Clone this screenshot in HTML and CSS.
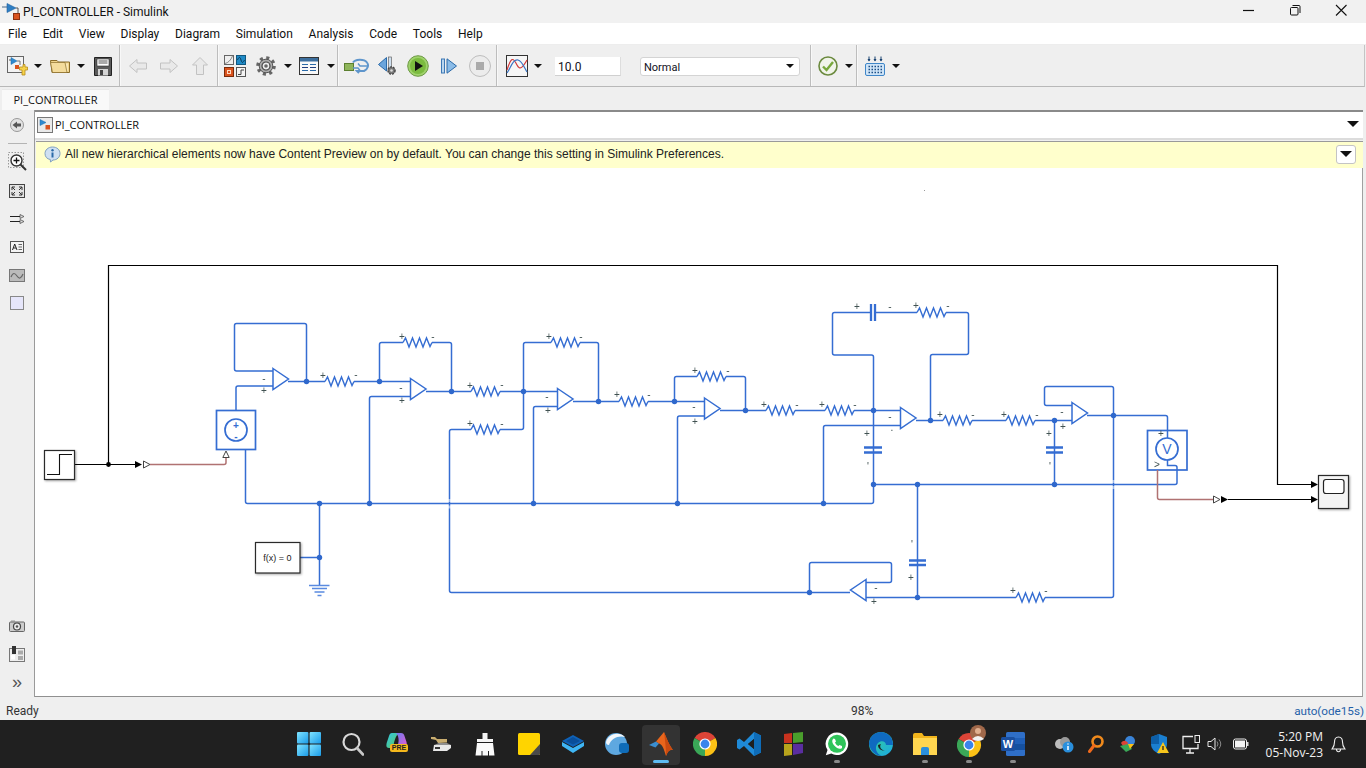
FILE: index.html
```html
<!DOCTYPE html>
<html lang="en">
<head>
<meta charset="utf-8">
<title>PI_CONTROLLER - Simulink</title>
<link rel="stylesheet" href="styles.css">
</head>
<body>
<header class="titlebar">
  <svg class="app-icon" width="20" height="20" viewBox="0 0 20 20"><path d="M0 5H5" stroke="#4a6a8a"/><path d="M5 1.5L14 6L5 10.500Z" fill="#2f7fc4" stroke="#1f5f9f" stroke-width=".6"/><path d="M14 6H16V11" fill="none" stroke="#555"/><rect x="11.500" y="11.500" width="6" height="6" fill="#d9531e" stroke="#8a3010"/></svg>
  <span class="title-text">PI_CONTROLLER - Simulink</span>
  <div class="winbtns">
    <svg width="46" height="23" viewBox="0 0 46 23"><path d="M17 10.500H28" stroke="#111" stroke-width="1.200"/></svg>
    <svg width="46" height="23" viewBox="0 0 46 23"><rect x="18.500" y="7.500" width="7.500" height="7.500" rx="1" fill="none" stroke="#111"/><path d="M20.500 5.500H27a1 1 0 0 1 1 1V13" fill="none" stroke="#111"/></svg>
    <svg width="46" height="23" viewBox="0 0 46 23"><path d="M18 5L28.500 15.500M28.500 5L18 15.500" stroke="#111" stroke-width="1.100"/></svg>
  </div>
</header>
<nav class="menubar">
  <span>File</span><span>Edit</span><span>View</span><span>Display</span><span>Diagram</span><span>Simulation</span><span>Analysis</span><span>Code</span><span>Tools</span><span>Help</span>
</nav>
<div class="toolbar">
  <svg width="21" height="21" viewBox="0 0 21 21"><rect x=".5" y=".5" width="16" height="16" fill="#f3f3f3" stroke="#666"/><path d="M2 4H4" stroke="#555"/><path d="M4 1.500L10 5L4 8.500Z" fill="#2f8ad0" stroke="#1c6aa8" stroke-width=".5"/><path d="M10 5H13V9" fill="none" stroke="#777"/><rect x="8" y="9" width="4" height="4" fill="#d9531e"/><path d="M13 11H16V8.500H18V11H20.500V14H18V16.500V19H15V14H12.500V11Z" fill="#f6d24a" stroke="#b58a1a" stroke-width=".8"/></svg>
  <i class="caret"></i>
  <svg width="20" height="14" viewBox="0 0 20 14"><path d="M.5 1.500H7L8.500 3H19.500V13.500H2Z" fill="#f1d58c" stroke="#8a6d2a"/><path d="M2.500 4.500H18V12.500H4Z" fill="#f9e7b5"/><path d="M.5 3.500H15L17 13.500H2.500Z" fill="#f4dc9c" stroke="#8a6d2a" stroke-width=".7"/></svg>
  <i class="caret"></i>
  <svg width="18" height="19" viewBox="0 0 18 19"><path d="M.5.500H17.500V18.500H.5Z" fill="#5b5b5b" stroke="#222"/><rect x="3" y="2" width="12" height="7" fill="#fff" stroke="#333" stroke-width=".6"/><path d="M4.500 4H13.500M4.500 6H13.500" stroke="#555"/><rect x="4" y="12" width="10" height="6.500" fill="#d5d5d5"/><rect x="6" y="13" width="3" height="5" fill="#444"/></svg>
  <i class="sep"></i>
  <svg width="18" height="14" viewBox="0 0 18 14"><path d="M.5 7L8 .5V4H17.500V10H8V13.500Z" fill="#e9e9e9" stroke="#c2c2c2"/></svg>
  <svg width="18" height="14" viewBox="0 0 18 14"><path d="M17.500 7L10 .5V4H.5V10H10V13.500Z" fill="#e9e9e9" stroke="#c2c2c2"/></svg>
  <svg width="16" height="18" viewBox="0 0 16 18"><path d="M8 .5L15.500 8H11.500V17.500H4.500V8H.5Z" fill="#e9e9e9" stroke="#c2c2c2"/></svg>
  <i class="sep"></i>
  <svg width="22" height="22" viewBox="0 0 22 22"><rect x=".5" y=".5" width="9" height="9" fill="#eee" stroke="#666"/><path d="M1 8.500C4 8 7 5 8.500 1" fill="none" stroke="#888"/><rect x="12.500" y=".5" width="9" height="9" fill="#1f8ac6" stroke="#10577f"/><path d="M13.500 5C15 1.500 16 1.500 17 5S19 8 20.500 5" fill="none" stroke="#0c3c5c"/><rect x=".5" y="12.500" width="9" height="9" fill="#d9531e" stroke="#7a2a0a"/><rect x="3.500" y="15.500" width="3" height="3" fill="none" stroke="#ffd9c0"/><rect x="12.500" y="12.500" width="9" height="9" fill="#f4f4f4" stroke="#555"/><path d="M14 19.500H17V15H20" fill="none" stroke="#444"/></svg>
  <svg width="20" height="20" viewBox="0 0 20 20"><circle cx="10" cy="10" r="8" fill="none" stroke="#666" stroke-width="3.600" stroke-dasharray="3 3.280"/><circle cx="10" cy="10" r="6.800" fill="#aaa" stroke="#555"/><circle cx="10" cy="10" r="4" fill="#eee" stroke="#444" stroke-width="1.200"/><circle cx="10" cy="10" r="1.800" fill="#666"/></svg>
  <i class="caret"></i>
  <svg width="20" height="18" viewBox="0 0 20 18"><rect x=".5" y=".5" width="19" height="17" fill="#f8f8f8" stroke="#333"/><rect x="1" y="1" width="18" height="3.500" fill="#3d6f9e"/><path d="M3 7.500H9M11 7.500H17" stroke="#2a6aa8" stroke-width="1.200"/><path d="M3 10.500H9M11 10.500H17" stroke="#1f3f7f" stroke-width="1.200"/><path d="M3 13.500H9M11 13.500H17" stroke="#2a6aa8" stroke-width="1.200"/></svg>
  <i class="caret"></i>
  <i class="sep"></i>
  <svg width="25" height="17" viewBox="0 0 25 17"><rect x=".5" y="5.500" width="9" height="7" fill="#8fb55a" stroke="#5b7f2f"/><path d="M9 4.500C11 1 20 .5 23 4.500C25 7 24 11 20 13H13L15 15" fill="none" stroke="#5f96cc" stroke-width="2"/><path d="M23 8H16L14 5.500M9 10H14L16 12.500" fill="none" stroke="#5f96cc" stroke-width="1.500"/></svg>
  <svg width="20" height="20" viewBox="0 0 20 20"><path d="M8.500 1.500V15L.5 8.500Z" fill="#6ba5dc" stroke="#2c6aa8"/><rect x="10.500" y="1" width="3" height="11" fill="#cfe0f0" stroke="#666" stroke-width=".7"/><circle cx="13.500" cy="14.500" r="3.600" fill="#777" stroke="#444" stroke-width="1.300" stroke-dasharray="2 1"/><circle cx="13.500" cy="14.500" r="1.300" fill="#ddd"/></svg>
  <svg width="22" height="22" viewBox="0 0 22 22"><circle cx="11" cy="11" r="10.300" fill="#9fd26b" stroke="#6d9a45"/><circle cx="11" cy="11" r="8" fill="#7bbb3f"/><path d="M8 6L16 11L8 16Z" fill="#111"/></svg>
  <svg width="16" height="16" viewBox="0 0 16 16"><rect x=".5" y="1" width="3" height="14" fill="#b9d5ee" stroke="#3d78b5"/><path d="M6 .8L15.500 8L6 15.200Z" fill="#8bbce8" stroke="#2c6aa8"/></svg>
  <svg width="22" height="22" viewBox="0 0 22 22"><circle cx="11" cy="11" r="10.500" fill="#ececec" stroke="#bdbdbd"/><rect x="7" y="7" width="8" height="8" fill="#aaa"/></svg>
  <i class="sep"></i>
  <svg width="30" height="22" viewBox="2 0 30 22"><rect x="8.500" y=".5" width="21" height="21" fill="#f6f6f6" stroke="#333"/><path d="M9 15C13 2 15 2 19 10C22 16 25 12 29 5" fill="none" stroke="#d23b3b" stroke-width="1.200"/><path d="M9 18C13 12 15 4 20 5C24 6 26 12 29 17" fill="none" stroke="#3a74c4" stroke-width="1.200"/></svg>
  <i class="caret"></i>
  <span class="stop-input">10.0</span>
  <div class="mode-select"><span>Normal</span><i class="caret"></i></div>
  <i class="sep wide"></i>
  <svg width="20" height="20" viewBox="0 0 20 20"><circle cx="10" cy="10" r="9" fill="#f1f4ea" stroke="#6b8a3f" stroke-width="1.600"/><path d="M5 10.500L8.500 14L15 6" fill="none" stroke="#78a83c" stroke-width="2.400"/></svg>
  <i class="caret"></i>
  <i class="sep narrow"></i>
  <svg width="20" height="20" viewBox="0 0 20 20"><path d="M4 .5V5M10 .5V5M16 .5V5" stroke="#17406f"/><path d="M2.500 3L4 5.500L5.500 3ZM8.500 3L10 5.500L11.500 3ZM14.500 3L16 5.500L17.500 3Z" fill="#17406f"/><rect x=".5" y="7.500" width="19" height="12" rx="1.500" fill="#cfe4f7" stroke="#3f86c8"/><path d="M3.500 10.500H17M3.500 13.500H17M3.500 16.500H17" stroke="#1d4f86" stroke-width="1.500" stroke-dasharray="1.500 1.500"/></svg>
  <i class="caret"></i>
</div>
<div class="tabrow"><div class="tab">PI_CONTROLLER</div></div>
<main class="workspace">
  <aside class="sidebar">
    <div class="side-cell first"><svg width="16" height="16" viewBox="0 0 16 16"><circle cx="8" cy="8" r="6.500" fill="#e2e2e2" stroke="#999"/><path d="M3.500 8L8 4.500V6.500H12V9.500H8V11.500Z" fill="#555"/></svg></div>
    <div class="side-rule"></div>
    <div class="side-cell zoomcell"><svg width="22" height="22" viewBox="0 0 22 22"><rect x=".5" y=".5" width="15" height="15" fill="none" stroke="#999" stroke-dasharray="1.500 1.500"/><circle cx="8.500" cy="8.500" r="5.500" fill="#fff" stroke="#333" stroke-width="1.400"/><path d="M5.500 8.500H11.500M8.500 5.500V11.500" stroke="#111" stroke-width="1.300"/><path d="M12.500 12.500L18 18" stroke="#333" stroke-width="2"/></svg></div>
    <div class="side-cell"><svg width="16" height="14" viewBox="0 0 16 14"><rect x=".5" y=".5" width="15" height="13" fill="#e4e4e4" stroke="#444"/><path d="M3 3H6M3 3V6M13 3H10M13 3V6M3 11H6M3 11V8M13 11H10M13 11V8M3 3L6 6M13 3L10 6M3 11L6 8M13 11L10 8" stroke="#333" fill="none"/></svg></div>
    <div class="side-cell"><svg width="15" height="10" viewBox="0 0 15 10"><path d="M0 2.500H10M0 7.500H10" stroke="#222"/><path d="M10 .5L14 2.500L10 4.500ZM10 5.500L14 7.500L10 9.500Z" fill="#ddd" stroke="#444" stroke-width=".7"/></svg></div>
    <div class="side-cell"><svg width="14" height="12" viewBox="0 0 14 12"><rect x=".5" y=".5" width="13" height="11" fill="#f4f4f4" stroke="#555"/><path d="M2.500 9L4.700 3L7 9M3.400 7H6" fill="none" stroke="#222"/><path d="M8.500 3.500H12M8.500 6H12M8.500 8.500H12" stroke="#666"/></svg></div>
    <div class="side-cell"><svg width="16" height="13" viewBox="0 0 16 13"><rect x=".5" y=".5" width="15" height="12" fill="#bbb" stroke="#777"/><path d="M2 8C4 3 6 4 8 7S12 10 14 5" fill="none" stroke="#666" stroke-width="1.200"/></svg></div>
    <div class="side-cell"><svg width="14" height="14" viewBox="0 0 14 14"><rect x=".5" y=".5" width="13" height="13" fill="#e6e6fa" stroke="#888"/></svg></div>
    <div class="side-bottom">
      <div class="side-cell"><svg width="16" height="12" viewBox="0 0 16 12"><rect x=".5" y="2" width="15" height="9.500" rx="1" fill="#ccc" stroke="#666"/><rect x="2" y=".5" width="4" height="2" fill="#999"/><circle cx="8" cy="6.500" r="3.500" fill="#eee" stroke="#444" stroke-width="1.200"/><circle cx="8" cy="6.500" r="1.300" fill="#555"/></svg></div>
      <div class="side-cell"><svg width="16" height="16" viewBox="0 0 16 16"><rect x=".5" y="2.500" width="15" height="13" fill="#eee" stroke="#777"/><rect x="3" y="0" width="4" height="8" fill="#333"/><rect x="2" y="9" width="4" height="4.500" fill="#fff"/><rect x="9" y="4.500" width="5" height="4" fill="#aaa"/><rect x="9" y="10" width="5" height="4" fill="#aaa"/></svg></div>
      <div class="side-cell chevrons">&raquo;</div>
    </div>
  </aside>
  <section class="content">
    <div class="address">
      <svg width="16" height="16" viewBox="0 0 16 16"><rect x=".5" y=".5" width="15" height="15" fill="#eaeaea" stroke="#777"/><path d="M3 2.500L9 5.500L3 8.500Z" fill="#2f8ad0" stroke="#1c6aa8" stroke-width=".5"/><rect x="8.500" y="8" width="4.500" height="4.500" fill="#d9531e"/></svg>
      <span class="crumb">PI_CONTROLLER</span>
      <i class="caret big"></i>
    </div>
    <div class="notice">
      <svg width="17" height="17" viewBox="0 0 17 17"><path d="M8.500 1C13 1 16 3.800 16 7.500S13 14 9 14L6.500 16L6.300 13.500C3 13 1 10.800 1 7.500S4 1 8.500 1Z" fill="#cfe0f2" stroke="#7f9fc0"/><circle cx="8.500" cy="4.200" r="1.200" fill="#2a6aa8"/><path d="M8.500 6.500V11.500" stroke="#2a6aa8" stroke-width="2"/></svg>
      <span class="notice-text">All new hierarchical elements now have Content Preview on by default. You can change this setting in Simulink Preferences.</span>
      <div class="notice-btn"><i class="caret big"></i></div>
    </div>
    <div class="canvas">
      <svg class="diagram" width="1327" height="528" viewBox="35 168 1327 528">
        <defs>
          <path id="res" d="M0 0L2.500-4.500L6 4.500L9.500-4.500L13 4.500L16.500-4.500L20 4.500L23.500-4.500L27 4L29 0" fill="none" stroke="#356dd2" stroke-width="1.400"/>
        </defs>
        <rect class="dot-mark" x="924" y="190" width="1" height="1"/>
        <g class="wire">
          <path d="M236 410V388Q236 386 238 386H273"/>
          <path d="M273 371H236.500Q234.500 371 234.500 369V325.500Q234.500 323.500 236.500 323.500H304.500Q306.500 323.500 306.500 325.500V381.500"/>
          <path d="M288 381.500H325M354 381.500H410"/>
          <path d="M379.500 381.500V344.500Q379.500 342.500 381.500 342.500H403M432 342.500H449.500Q451.500 342.500 451.500 344.500V391.500"/>
          <path d="M426 391.500H471M500 391.500H557"/>
          <path d="M523.500 391.500V344.500Q523.500 342.500 525.500 342.500H551M580 342.500H596.500Q598.500 342.500 598.500 344.500V401.500"/>
          <path d="M573 401.500H619M648 401.500H704"/>
          <path d="M471 429.500H451.500Q449.500 429.500 449.500 431.500V590.500Q449.500 592.500 451.500 592.500H850M500 429.500H521.500Q523.500 429.500 523.500 427.500V391.500"/>
          <path d="M533.500 503.500V408.500Q533.500 406.500 535.500 406.500H557"/>
          <path d="M674.500 401.500V378.500Q674.500 376.500 676.500 376.500H697M726 376.500H743.500Q745.500 376.500 745.500 378.500V410.500"/>
          <path d="M720 410.500H766M795 410.500H825M854 410.500H900"/>
          <path d="M677.500 503.500V418Q677.500 416 679.500 416H704"/>
          <path d="M369.500 503.500V398.500Q369.500 396.500 371.500 396.500H410"/>
          <path d="M245.500 450V501.500Q245.500 503.500 247.500 503.500H871.500Q873.500 503.500 873.500 501.500V357Q873.500 355 871.500 355H834.500Q832.500 355 832.500 353V314.500Q832.500 312.500 834.500 312.500H871M875 312.500H917M946 312.500H966.500Q968.500 312.500 968.500 314.500V352.500Q968.500 354.500 966.500 354.500H932.500Q930.500 354.500 930.500 356.500V420.500"/>
          <path d="M823.500 503.500V427.500Q823.500 425.500 825.500 425.500H900"/>
          <path d="M916 420.500H943M972 420.500H1006M1035 420.500H1072"/>
          <path d="M1072 405.500H1046.500Q1044.500 405.500 1044.500 403.500V388.500Q1044.500 386.500 1046.500 386.500H1111.500Q1113.500 386.500 1113.500 388.500V595.500Q1113.500 597.500 1111.500 597.500H1045M1016 597.500H866"/>
          <path d="M1087 415.500H1165.500Q1167.500 415.500 1167.500 417.500V438"/>
          <path d="M1167.500 460V465.500H1175Q1177 465.500 1177 467.500V482.500Q1177 484.500 1175 484.500H873.500"/>
          <path d="M1054.500 420.500V484.500M917.500 484.500V597.500"/>
          <path d="M866 582.500H889.500Q891.500 582.500 891.500 580.500V564.500Q891.500 562.500 889.500 562.500H811.500Q809.500 562.500 809.500 564.500V592.500"/>
          <path d="M319.500 503.500V585M300 557.500H319.500"/>
        </g>
        <path class="halo" d="M449.500 499V502M449.500 505.500V508.500M1113.500 480V483M1113.500 486V489"/>
        <g>
          <use href="#res" x="325" y="381.500"/><use href="#res" x="403" y="342.500"/><use href="#res" x="471" y="391.500"/>
          <use href="#res" x="551" y="342.500"/><use href="#res" x="619" y="401.500"/><use href="#res" x="471" y="429.500"/>
          <use href="#res" x="697" y="376.500"/><use href="#res" x="766" y="410.500"/><use href="#res" x="825" y="410.500"/>
          <use href="#res" x="917" y="312.500"/><use href="#res" x="943" y="420.500"/><use href="#res" x="1006" y="420.500"/>
          <use href="#res" x="1016" y="597.500"/>
        </g>
        <g class="amp">
          <polygon points="273,368.500 288.500,379 273,389.500"/>
          <polygon points="410.500,378.500 426,389 410.500,399.500"/>
          <polygon points="557.500,388.500 573,399 557.500,409.500"/>
          <polygon points="704.500,398 720,408.500 704.500,419"/>
          <polygon points="900.500,407.500 916,418 900.500,428.500"/>
          <polygon points="1072,402.500 1087.500,413 1072,423.500"/>
          <polygon points="866,579.500 850.500,590 866,600.500"/>
        </g>
        <g class="plate">
          <path d="M871 304V321M875 304V321"/>
          <path d="M864 447.500H882M864 452.500H882"/>
          <path d="M1046 447.500H1063M1046 452.500H1063"/>
          <path d="M909 560.500H926M909 565H926"/>
        </g>
        <g class="ground">
          <path d="M309 585.500H329.500M312 588.500H327M314.500 592H324.500M317.500 595.500H321.500"/>
        </g>
        <g class="node">
          <circle cx="306.500" cy="381.500" r="2.700"/><circle cx="379.500" cy="381.500" r="2.700"/><circle cx="451.500" cy="391.500" r="2.700"/>
          <circle cx="523.500" cy="391.500" r="2.700"/><circle cx="598.500" cy="401.500" r="2.700"/><circle cx="674.500" cy="401.500" r="2.700"/>
          <circle cx="745.500" cy="410.500" r="2.700"/><circle cx="873.500" cy="410.500" r="2.700"/><circle cx="930.500" cy="420.500" r="2.700"/>
          <circle cx="1054.500" cy="420.500" r="2.700"/><circle cx="1113.500" cy="415.500" r="2.700"/><circle cx="873.500" cy="484.500" r="2.700"/>
          <circle cx="917.500" cy="484.500" r="2.700"/><circle cx="1054.500" cy="484.500" r="2.700"/><circle cx="917.500" cy="597.500" r="2.700"/>
          <circle cx="809.500" cy="592.500" r="2.700"/><circle cx="319.500" cy="503.500" r="2.700"/><circle cx="369.500" cy="503.500" r="2.700"/>
          <circle cx="533.500" cy="503.500" r="2.700"/><circle cx="677.500" cy="503.500" r="2.700"/><circle cx="823.500" cy="503.500" r="2.700"/>
          <circle cx="319.500" cy="557.500" r="2.700"/>
        </g>
        <g class="block">
          <rect x="216.500" y="410.500" width="39" height="39"/>
          <circle cx="236" cy="430" r="11"/>
          <rect x="1147.500" y="430.500" width="39.500" height="39.500"/>
          <circle cx="1167" cy="449" r="11"/>
        </g>
        <text class="v-mark" x="1167" y="454">V</text>
        <text class="src-mark" x="236" y="429">+</text>
        <text class="src-mark" x="236" y="440">-</text>
        <g class="sign">
          <text x="264" y="382">-</text><text x="264" y="394">+</text>
          <text x="401" y="391">-</text><text x="402" y="404">+</text>
          <text x="547" y="400">-</text><text x="548" y="414">+</text>
          <text x="694" y="410">-</text><text x="695" y="425">+</text>
          <text x="890" y="420">-</text><text x="892" y="431">.</text>
          <text x="1062" y="415">-</text><text x="1063" y="430">+</text>
          <text x="876" y="591">-</text><text x="874" y="605">+</text>
          <text x="323" y="379">+</text><text x="356" y="378">-</text>
          <text x="402" y="340">+</text><text x="433" y="340">-</text>
          <text x="470" y="389">+</text><text x="502" y="388">-</text>
          <text x="549" y="340">+</text><text x="581" y="340">-</text>
          <text x="617" y="398">+</text><text x="649" y="398">-</text>
          <text x="470" y="427">+</text><text x="502" y="427">-</text>
          <text x="695" y="374">+</text><text x="728" y="374">-</text>
          <text x="764" y="408">+</text><text x="797" y="408">-</text>
          <text x="822" y="408">+</text><text x="855" y="408">-</text>
          <text x="857" y="310">+</text><text x="890" y="310">-</text>
          <text x="916" y="309">+</text><text x="948" y="309">-</text>
          <text x="940" y="418">+</text><text x="973" y="418">-</text>
          <text x="1004" y="418">+</text><text x="1037" y="418">-</text>
          <text x="1013" y="594">+</text><text x="1046" y="594">-</text>
          <text x="867" y="437">+</text><text x="868" y="470">'</text>
          <text x="1049" y="437">+</text><text x="1050" y="470">'</text>
          <text x="912" y="548">'</text><text x="911" y="581">+</text>
          <text x="1161" y="437">+</text><text x="1157" y="468">&gt;</text>
        </g>
        <g class="signal">
          <path d="M74 464.500H135M108.500 464.500V265.500H1277.500V484.500H1311M1228 499.500H1311"/>
        </g>
        <g class="head">
          <path d="M135 461L142 464.500L135 468ZM1221 496L1228 499.500L1221 503ZM1311 481L1318 484.500L1311 488ZM1311 496L1318 499.500L1311 503Z"/>
          <circle cx="108.500" cy="464.500" r="2.400"/>
        </g>
        <g class="phys">
          <path d="M150 464.500H224Q226 464.500 226 462.500V458"/>
          <path d="M1157.500 470V497.500Q1157.500 499.500 1159.500 499.500H1213"/>
        </g>
        <g class="hollow">
          <path d="M143.500 461L150 464.500L143.500 468ZM222.800 457.500L226 451L229.200 457.500ZM1213.500 496L1220 499.500L1213.500 503Z"/>
        </g>
        <g class="lib">
          <rect x="44.500" y="450.500" width="30" height="29"/>
          <rect x="255.500" y="542.500" width="44.500" height="30.500"/>
          <rect class="scope-body" x="1318.500" y="475.500" width="30" height="33"/>
        </g>
        <path class="step" d="M47 474.500H59.500V454.500H72"/>
        <rect class="scope-screen" x="1323.500" y="479.500" width="20.500" height="14" rx="2.500"/>
        <text class="fx" x="277.500" y="561">f(x) = 0</text>
      </svg>
    </div>
  </section>
</main>
<footer class="statusbar"><span class="ready">Ready</span><span class="zoom-level">98%</span><span class="solver">auto(ode15s)</span></footer>
<div class="taskbar">
  <div class="task"><svg width="24" height="24" viewBox="0 0 24 24"><defs><linearGradient id="wn" x1="0" y1="0" x2="1" y2="1"><stop offset="0" stop-color="#7fe3ff"/><stop offset="1" stop-color="#1a9be8"/></linearGradient></defs><rect x="0" y="0" width="11.400" height="11.400" rx="1" fill="url(#wn)"/><rect x="12.600" y="0" width="11.400" height="11.400" rx="1" fill="url(#wn)"/><rect x="0" y="12.600" width="11.400" height="11.400" rx="1" fill="url(#wn)"/><rect x="12.600" y="12.600" width="11.400" height="11.400" rx="1" fill="url(#wn)"/></svg></div>
  <div class="task"><svg width="22" height="24" viewBox="0 0 22 24"><circle cx="9.500" cy="10" r="8" fill="none" stroke="#d8d8d8" stroke-width="2.200"/><path d="M15 16L21 22.500" stroke="#c8c8c8" stroke-width="2.600" stroke-linecap="round"/></svg></div>
  <div class="task copilot"><svg width="22" height="18" viewBox="0 0 22 18"><defs><linearGradient id="cp" x1="0" y1="0" x2="1" y2="1"><stop offset="0" stop-color="#2fc6e8"/><stop offset="1" stop-color="#5fc85a"/></linearGradient><linearGradient id="cq" x1="0" y1="0" x2="1" y2="1"><stop offset="0" stop-color="#6a7bf0"/><stop offset="1" stop-color="#e85ad0"/></linearGradient></defs><path d="M6 1H13C9 4 8 11 7 16H3C0 16 0 13 1 10L3 4C3.500 2 4.500 1 6 1Z" fill="url(#cp)"/><path d="M10 1H15C17 1 18 2 18.500 4L20.500 10C21.500 14 20 16 17 16H10C13 13 14 5 10 1Z" fill="url(#cq)"/></svg><span class="pre">PRE</span></div>
  <div class="task"><svg width="22" height="16" viewBox="0 0 22 16"><path d="M1 1H5L7 3L17 3V6.500L8 7L6 4L1 3Z" fill="#c9ad6f"/><path d="M4 9H21V12L17 15H3Z" fill="#e8e8e8"/><path d="M4 9L9 7H17L21 9Z" fill="#8e8e8e"/><rect x="5" y="11" width="5" height="2" fill="#333"/></svg></div>
  <div class="task"><svg width="20" height="24" viewBox="0 0 20 24"><path d="M7.500 1H12.500V7H18V10H2V7H7.500Z" fill="#f4f4f4"/><path d="M2 11H18L19.500 23.500H14V19H13V23.500H7.500V19H6.500V23.500H.5Z" fill="#fafafa"/></svg></div>
  <div class="task"><svg width="22" height="22" viewBox="0 0 22 22"><rect width="22" height="22" rx="1.500" fill="#ffd400"/><path d="M12 22L22 11V20.500Q22 22 20.500 22Z" fill="#4a4a4a"/></svg></div>
  <div class="task"><svg width="22" height="18" viewBox="0 0 22 18"><path d="M11 0L22 6L11 12L0 6Z" fill="#0e62b8"/><path d="M0 7L11 13L22 7V11L11 18L0 11Z" fill="#3fb6f5"/><path d="M4 6L11 2L18 6L11 9.500Z" fill="#0a4f9a"/></svg></div>
  <div class="task"><svg width="24" height="24" viewBox="0 0 24 24"><circle cx="11" cy="12" r="11" fill="#5ea8e0"/><path d="M1 10C3 2 14-1 20 5C14 3 6 6 4 13C2 13 1 12 1 10Z" fill="#f2f7fb"/><rect x="14" y="11" width="10" height="10" rx="3" fill="#0f6cb8"/></svg></div>
  <div class="task active"><svg width="24" height="24" viewBox="0 0 24 24"><path d="M0 13L7 9.500L10 11.500L6.500 15.500Z" fill="#3b8ed0"/><path d="M7 9.500L15 0C17 5 20 13 24 18C21 17 19 19 17 24C15 17 13 12 10 11.500Z" fill="#e8651c"/><path d="M15 0C16 8 17 15 17 24C19 19 21 17 24 18C20 13 17 5 15 0Z" fill="#c94a10"/></svg></div>
  <div class="task"><svg width="24" height="24" viewBox="0 0 24 24"><use href="#chrome"/></svg></div>
  <div class="task"><svg width="24" height="24" viewBox="0 0 24 24"><path d="M17 0L24 3.500V20.500L17 24L7 14L2.500 17.500L0 16V8L2.500 6.500L7 10ZM17 7L11 12L17 17Z" fill="#1f8ad8"/><path d="M17 0L24 3.500V20.500L17 24Z" fill="#0e6cb8"/><path d="M17 7V17L11 12Z" fill="#1f1f1f"/></svg></div>
  <div class="task"><svg width="22" height="24" viewBox="0 0 22 24"><path d="M2 2L10 1V11L2 11Z" fill="#c8321e"/><path d="M11 1L21 0V10L11 11Z" fill="#4a9e2c"/><path d="M2 12H10V23L2 24Z" fill="#b8a41c"/><path d="M11 12H21V21L11 23Z" fill="#5a2ea0"/></svg></div>
  <div class="task dotted"><svg width="24" height="24" viewBox="0 0 24 24"><path d="M12 .5A11.300 11.300 0 0 0 2.500 18L.8 23.300L6.300 21.600A11.300 11.300 0 1 0 12 .5Z" fill="#fff"/><circle cx="12" cy="11.800" r="9" fill="#2fc45a"/><path d="M8.500 6.500C6.500 8 7 11 9.500 13.800S15 17.800 17 16L17 14L14.500 13L13.500 14C12 13.500 10.500 12 10 10.500L11 9.500L10 7Z" fill="#fff"/></svg></div>
  <div class="task"><svg width="24" height="24" viewBox="0 0 24 24"><defs><linearGradient id="eg" x1="0" y1="0" x2="1" y2="1"><stop offset="0" stop-color="#38d48a"/><stop offset="1" stop-color="#1aa8e8"/></linearGradient></defs><circle cx="12" cy="12" r="12" fill="url(#eg)"/><path d="M0 12C1 18 6 24 13 24C7 22 5 15 9 11C12 8 17 9 17 13H24C24 5 18 0 12 0C5 0 0 5 0 12Z" fill="#0f6ac0"/><path d="M9 13C9 17 13 19 16 18.500C12 18 10 15 12 12Z" fill="#1f1f1f"/></svg></div>
  <div class="task dotted"><svg width="24" height="22" viewBox="0 0 24 22"><path d="M0 2Q0 0 2 0H9L11 3H24V22H0Z" fill="#f2b51c"/><rect y="5" width="24" height="17" fill="#ffd650"/><path d="M8 22V16Q8 14 10 14H14Q16 14 16 16V22Z" fill="#2a8fdc"/></svg></div>
  <div class="task dotted"><svg class="chrome-a" width="30" height="32" viewBox="0 0 30 32"><defs><g id="chrome"><path d="M12 12L22.400 6A12 12 0 0 0 1.600 6Z" fill="#dc4437"/><path d="M12 12L1.600 6A12 12 0 0 0 12 24Z" fill="#3aa757"/><path d="M12 12L12 24A12 12 0 0 0 22.400 6Z" fill="#fbc116"/><circle cx="12" cy="12" r="5.600" fill="#fff"/><circle cx="12" cy="12" r="4.400" fill="#3a84ec"/></g></defs><g transform="translate(0 8)"><use href="#chrome"/></g><circle cx="21" cy="8" r="8" fill="#a0684a"/><circle cx="21" cy="6" r="3" fill="#e0b090"/><path d="M15 14Q21 8 27 14Q21 18 15 14Z" fill="#f2f2f2"/></svg></div>
  <div class="task dotted"><svg width="24" height="24" viewBox="0 0 24 24"><rect x="5" y="0" width="19" height="24" rx="1.500" fill="#2f6fc8"/><rect x="5" y="6" width="19" height="6" fill="#1f5fb8"/><rect x="5" y="12" width="19" height="6" fill="#15509f"/><rect x="0" y="5" width="14" height="14" rx="1.500" fill="#1a4fa0"/><text class="word-w" x="7" y="16">W</text></svg></div>
  <div class="tray">
    <div class="tray-cell"><svg width="20" height="18" viewBox="0 0 20 18"><circle cx="6" cy="9" r="5" fill="#bdbdbd"/><circle cx="11" cy="7" r="5" fill="#9a9a9a"/><circle cx="14" cy="12" r="5.500" fill="#2a8fdc"/><path d="M14 8.500V9.500M14 11V15" stroke="#fff" stroke-width="1.500"/></svg></div>
    <div class="tray-cell"><svg width="16" height="18" viewBox="0 0 16 18"><circle cx="9.500" cy="6.500" r="5" fill="none" stroke="#f08a1c" stroke-width="2.600"/><path d="M6 10.500L1.500 16.500" stroke="#f06a1c" stroke-width="3" stroke-linecap="round"/></svg></div>
    <div class="tray-cell"><svg width="18" height="18" viewBox="0 0 18 18"><circle cx="11" cy="6" r="5" fill="#3a84d8"/><path d="M2 8C4 5 7 5 9 8L6 14Z" fill="#dc4437"/><path d="M1 11L9 9L13 14L7 17Z" fill="#3aa757"/><path d="M9 9L15 9L11 14Z" fill="#fbc116"/></svg></div>
    <div class="tray-cell"><svg width="18" height="20" viewBox="0 0 18 20"><path d="M8 0L16 3V10C16 15 12 18 8 20C4 18 0 15 0 10V3Z" fill="#1a7fd0"/><path d="M8 0V10H0V3Z" fill="#0d5fa8"/><path d="M12 8L18 19H6Z" fill="#f6c51c"/><path d="M12 12V16" stroke="#222" stroke-width="1.300"/></svg></div>
    <div class="tray-cell"><svg width="19" height="19" viewBox="0 0 19 19"><path d="M11 1.500H1V13.500H16V9" fill="none" stroke="#eee" stroke-width="1.300"/><rect x="13" y=".5" width="4.500" height="7" fill="none" stroke="#eee"/><path d="M8 14V18M4 18H12" stroke="#eee" stroke-width="1.300"/></svg></div>
    <div class="tray-cell"><svg width="16" height="16" viewBox="0 0 16 16"><path d="M1 5.500H4L8 2V14L4 10.500H1Z" fill="none" stroke="#e8e8e8"/><path d="M10 5.500Q12 8 10 10.500M12 3.500Q15.500 8 12 12.500" fill="none" stroke="#8a8a8a"/></svg></div>
    <div class="tray-cell"><svg width="16" height="12" viewBox="0 0 16 12"><rect x=".5" y="1" width="13" height="10" rx="2" fill="none" stroke="#eee"/><rect x="2" y="2.500" width="10" height="7" fill="#f4f4f4"/><rect x="14" y="4" width="1.500" height="4" fill="#ddd"/></svg></div>
    <div class="clock"><span>5:20 PM</span><span>05-Nov-23</span></div>
    <div class="tray-cell"><svg width="15" height="17" viewBox="0 0 15 17"><path d="M7.500 1C4.500 1 3.500 3.500 3.500 6C3.500 10 2.500 11 1 13H14C12.500 11 11.500 10 11.500 6C11.500 3.500 10.500 1 7.500 1ZM5.500 13.500C5.700 16.500 9.300 16.500 9.500 13.500" fill="none" stroke="#eee" stroke-width="1.100"/></svg></div>
  </div>
</div>
</body>
</html>
```
FILE: styles.css
```css
* { box-sizing: border-box; }
html, body { margin: 0; padding: 0; }
body {
  width: 1366px;
  height: 768px;
  overflow: hidden;
  display: flex;
  flex-direction: column;
  background: #efefef;
  color: #111;
  font-family: "Open Sans", "Noto Sans", sans-serif;
  font-size: 12px;
}
i { display: block; }
svg { display: block; }

.titlebar { height: 23px; background: #f1f1f1; display: flex; align-items: center; position: relative; }
.app-icon { margin-left: 2px; }
.title-text { margin-left: 1px; font: 12px "Roboto", sans-serif; }
.winbtns { margin-left: auto; margin-right: 2px; display: flex; }

.menubar { height: 22px; background: #fff; display: flex; align-items: center; padding: 1px 0 0 8px; gap: 15.800px; border-bottom: 1px solid #ededed; font: 12px "Roboto", sans-serif; }

.toolbar {
  height: 42px;
  padding: 1px 0 0 3px;
  margin-right: 1px;
  display: grid;
  grid-template-columns: 28px 14px 30px 12px 32px 2px 34px 28px 34px 2px 32px 30px 13px 30px 13px 2px 34px 30px 30px 31px 32px 2px 34px 12px 77px 179px 12px 32px 10px 4px 34px 8px;
  grid-template-rows: 1fr;
  align-items: center;
  justify-items: center;
  background: #efefef;
  border-bottom: 1px solid #b8b8b8;
  border-right: 1px solid #c4c4c4;
}
.sep { width: 2px; align-self: stretch; justify-self: start; border-left: 1px solid #bdbdbd; border-right: 1px solid #f8f8f8; margin-top: -1px; height: calc(100% + 1px); }
.sep.wide { justify-self: end; }
.sep.narrow { justify-self: end; }
.caret { width: 0; height: 0; border-left: 4px solid transparent; border-right: 4px solid transparent; border-top: 4px solid #111; }
.caret.big { border-left-width: 6px; border-right-width: 6px; border-top-width: 6px; }
.stop-input {
  justify-self: end;
  width: 66px;
  height: 19px;
  background: #fff;
  border-bottom: 1px solid #d0d0d0;
  border-right: 1px solid #ddd;
  padding-left: 3px;
  font: 12px/20px "Roboto", "Liberation Sans", sans-serif;
  color: #112;
}
.mode-select {
  justify-self: end;
  width: 160px;
  height: 19px;
  background: #fff;
  border: 1px solid #d4d4d4;
  border-radius: 3px;
  display: flex;
  align-items: center;
  justify-content: space-between;
  padding: 2px 5px 0 3px;
  font-family: "Roboto", "Liberation Sans", sans-serif;
  font-size: 11px;
  color: #112;
}
.mode-select .caret { margin-top: -2px; }

.tabrow { height: 23px; padding: 2px 0 0 2px; background: #efefef; }
.tab { width: 107px; height: 21px; background: #f9f9f9; text-align: center; line-height: 20px; font-size: 11px; border-top: 1px solid #e8e8e8; }

.workspace { height: 587px; display: flex; }
.sidebar { width: 34px; display: flex; flex-direction: column; align-items: stretch; }
.side-cell { height: 28px; display: flex; align-items: center; justify-content: center; }
.side-cell.first { height: 30px; }
.side-cell.zoomcell { height: 29px; margin-top: 4px; padding-left: 4px; }
.side-rule { height: 1px; margin: 3px 7px 0 8px; background: #b4b4b4; }
.side-bottom { margin-top: auto; }
.side-cell.chevrons { height: 29px; font: 18px/1 "Liberation Sans", sans-serif; color: #555; padding-bottom: 1px; }

.content { width: 1329px; display: flex; flex-direction: column; border-left: 1px solid #9a9a9a; }
.address {
  height: 30px;
  background: #fff;
  border-top: 2px solid #8a8a8a;
  border-bottom: 2px solid #dcdcdc;
  display: flex;
  align-items: center;
  padding: 0 4px 1px 2px;
  font-size: 11px;
}
.crumb { margin-left: 2px; }
.address .caret { margin: 0 0 1px auto; }
.notice {
  height: 27px;
  margin: 1px 0 0 1px;
  background: #ffffcc;
  border-top: 1px solid #9a9a9a;
  display: flex;
  align-items: center;
  padding: 0 7px 1px 8px;
}
.notice-text { margin: 0 0 1px 4px; font: 12px "Liberation Sans", sans-serif; color: #222; }
.notice-btn { margin: 0 0 1px auto; width: 20px; height: 19px; background: #fff; border: 1px solid #c4c4c4; border-radius: 3px; display: flex; align-items: center; justify-content: center; }

.canvas { flex: 1; background: #fff; border-right: 1px solid #a0a0a0; border-bottom: 1px solid #909090; overflow: hidden; }
.diagram { display: block; }
.dot-mark { fill: #999; }
.wire path { fill: none; stroke: #356dd2; stroke-width: 1.500; }
.halo { fill: none; stroke: #fff; stroke-width: 3; opacity: .5; }
.amp polygon { fill: #fff; stroke: #356dd2; stroke-width: 1.500; }
.plate path { fill: none; stroke: #356dd2; stroke-width: 2.300; }
.ground path { fill: none; stroke: #5a8ae0; stroke-width: 1.500; }
.node circle { fill: #2f68cc; }
.block rect, .block circle { fill: none; stroke: #356dd2; stroke-width: 1.700; }
.v-mark { font: 14px "Liberation Sans", sans-serif; fill: #356dd2; text-anchor: middle; }
.src-mark { font: bold 10px "Liberation Sans", sans-serif; fill: #356dd2; text-anchor: middle; }
.sign { opacity: .99; }
.sign text { font: 10px "Liberation Sans", sans-serif; fill: #3f5050; text-anchor: middle; }
.signal path { fill: none; stroke: #000; stroke-width: 1.200; }
.head path, .head circle { fill: #000; }
.phys path { fill: none; stroke: #b07272; stroke-width: 1.500; }
.hollow path { fill: #fff; stroke: #444; stroke-width: 1; }
.lib rect { fill: #fff; stroke: #2a2a2a; stroke-width: 1.200; filter: drop-shadow(1.500px 1.500px 1px rgba(0, 0, 0, .35)); }
.lib .scope-body { fill: #f4f4f4; }
.step { fill: none; stroke: #111; stroke-width: 1.100; }
.scope-screen { fill: #fff; stroke: #222; stroke-width: 1.200; }
.fx { font: 9px "Liberation Sans", sans-serif; fill: #222; text-anchor: middle; }

.statusbar { height: 23px; display: grid; grid-template-columns: 851px 1fr auto; align-items: center; padding: 5px 2px 0 0; background: #efefef; font: 12px "Roboto", sans-serif; }
.ready { padding-left: 6px; color: #333; }
.zoom-level { color: #333; }
.solver { color: #1f5fa8; font-size: 11.700px; }

.taskbar { height: 48px; background: #202020; display: flex; align-items: center; padding-left: 287px; }
.task { width: 44px; height: 48px; position: relative; display: flex; align-items: center; justify-content: center; flex: none; }
.task.active::before { content: ""; position: absolute; left: 3px; right: 3px; top: 5px; bottom: 3px; background: #333; border-radius: 4px; }
.task.active svg { position: relative; }
.task.active::after { content: ""; position: absolute; left: 14px; width: 16px; top: 40px; height: 3px; background: #5fbcf2; border-radius: 2px; }
.task.dotted::after { content: ""; position: absolute; left: 19px; width: 6px; top: 40px; height: 3px; background: #8a8a8a; border-radius: 2px; }
.copilot svg { margin-top: -6px; }
.pre { position: absolute; left: 15px; top: 24px; width: 18px; height: 8px; background: #f5b81c; border-radius: 2px; color: #222; font: bold 7px/8px "Liberation Sans", sans-serif; text-align: center; }
.chrome-a { margin-left: 6px; margin-top: -6px; }
.word-w { font: bold 11px "Liberation Sans", sans-serif; fill: #fff; text-anchor: middle; }

.tray { margin-left: 13px; height: 48px; display: grid; grid-template-columns: 32px 32px 32px 32px 30px 18px 34px 65px 30px; align-items: center; justify-items: center; color: #f2f2f2; }
.tray-cell { display: flex; align-items: center; justify-content: center; }
.clock { justify-self: end; display: flex; flex-direction: column; align-items: flex-end; gap: 3px; font-size: 12px; line-height: 13px; }
```
